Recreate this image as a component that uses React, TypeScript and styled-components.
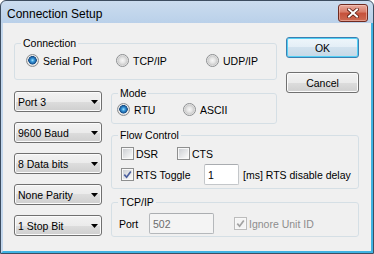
import React from "react";
import styled, { createGlobalStyle } from "styled-components";

const GlobalStyle = createGlobalStyle`
  html, body { margin: 0; padding: 0; background: #ffffff; }
  body {
    font-family: "Liberation Sans", Arial, sans-serif;
    font-size: 10.5px;
    color: #000;
  }
  * { box-sizing: border-box; }
`;

// window chrome
const Window = styled.div`
  width: 374px;
  height: 254px;
  display: flex;
  flex-direction: column;
  border: 1px solid #3d4d60;
  border-radius: 6px 6px 0 0;
  background: linear-gradient(#cbdcef, #b9d0e9 23px);
  overflow: hidden;
`;

const TitleBar = styled.div`
  height: 22px;
  flex: none;
  display: flex;
  align-items: center;
  justify-content: space-between;
  padding: 0 5px 0 6px;
`;

const Title = styled.span`
  font-size: 12px;
  margin-top: 3px;
`;

const CloseButton = styled.div`
  width: 30px;
  height: 18px;
  margin-top: 1px;
  display: flex;
  align-items: center;
  justify-content: center;
  border: 1px solid #6f2b21;
  border-radius: 3px;
  background: linear-gradient(#e8ab9e, #d77a67 45%, #c5503a 50%, #cd6a52);
  box-shadow: inset 0 0 0 1px rgba(255, 220, 210, 0.45);
`;

const Client = styled.div`
  flex: 1;
  background: #f0f0f0;
  border-left: 2px solid #c3d7ed;
  border-right: 2px solid #3fb3e3;
  border-bottom: 2px solid #3fb3e3;
  padding: 14px 0 0 11px;
`;

const Layout = styled.div`
  display: grid;
  grid-template-columns: 88px 166px 73px;
  column-gap: 9px;
  align-items: start;
`;

// group boxes
const Group = styled.fieldset<{ $col: string; $row: string; $top?: number }>`
  grid-column: ${(p) => p.$col};
  grid-row: ${(p) => p.$row};
  margin: ${(p) => p.$top ?? 0}px 0 0 0;
  min-width: 0;
  padding: 0;
  border: 1px solid #d5dfe5;
  border-radius: 3px;
`;

const Legend = styled.legend`
  margin-left: 6px;
  padding: 0 2px;
  line-height: 13px;
`;

const GroupBody = styled.div<{ $pad: string }>`
  padding: ${(p) => p.$pad};
`;

const OptionRow = styled.div<{ $cell: number }>`
  display: grid;
  grid-template-columns: repeat(3, ${(p) => p.$cell}px);
  height: 15px;
`;

const Option = styled.label<{ $disabled?: boolean }>`
  display: flex;
  align-items: center;
  gap: 4px;
  height: 15px;
  white-space: nowrap;
  color: ${(p) => (p.$disabled ? "#8d8d8d" : "#000")};
`;

const CheckOption = styled(Option)<{ $width?: number; $offset?: number }>`
  gap: 2px;
  width: ${(p) => (p.$width ? `${p.$width}px` : "auto")};
  margin-left: ${(p) => p.$offset ?? 0}px;
  flex: none;
`;

const Radio = styled.span<{ $checked?: boolean }>`
  width: 13px;
  height: 13px;
  flex: none;
  border-radius: 50%;
  border: 1px solid #8c8e90;
  background: ${(p) =>
    p.$checked
      ? "radial-gradient(circle at 50% 48%, #a9e6fc 0, #3f9fe0 1.5px, #1b5f9f 3.4px, #1a4c80 4px, #f2f2f2 4.5px, #d9d9d9 5.5px)"
      : "radial-gradient(circle, #f7f7f7 0, #e6e6e6 2.5px, #cdcdcd 4.6px, #f3f3f3 5.5px)"};
`;

const CheckBox = styled.span<{ $disabled?: boolean }>`
  width: 13px;
  height: 13px;
  flex: none;
  display: flex;
  align-items: center;
  justify-content: center;
  border: 1px solid ${(p) => (p.$disabled ? "#bcbcbc" : "#8e8f8f")};
  background: ${(p) =>
    p.$disabled ? "#f4f4f4" : "linear-gradient(135deg, #cdd0d4 10%, #f7f7f7 85%)"};
  box-shadow: inset 0 0 0 1px #f8f8f8;
`;

const FlowRow = styled.div<{ $height: number }>`
  display: flex;
  align-items: center;
  height: ${(p) => p.$height}px;
`;

const Stack = styled.div`
  display: flex;
  flex-direction: column;
  gap: 3px;
`;

const Edit = styled.div<{ $width: number; $disabled?: boolean }>`
  width: ${(p) => p.$width}px;
  height: 21px;
  flex: none;
  display: flex;
  align-items: center;
  padding-left: 3px;
  border: 1px solid ${(p) => (p.$disabled ? "#b5b8bb" : "#c4c7ca")};
  border-top-color: ${(p) => (p.$disabled ? "#abaeb1" : "#a9acb0")};
  border-radius: 2px;
  background: ${(p) => (p.$disabled ? "#f4f4f4" : "#ffffff")};
  color: ${(p) => (p.$disabled ? "#6d6d6d" : "#000")};
`;

const Note = styled.span`
  margin-left: 4px;
  white-space: nowrap;
`;

const FieldLabel = styled.span`
  width: 30px;
  flex: none;
`;

// left column combos
const ComboColumn = styled.div`
  grid-column: 1;
  grid-row: 2 / 5;
  padding-top: 11px;
  display: flex;
  flex-direction: column;
  gap: 10px;
`;

const Combo = styled.div`
  height: 21px;
  display: flex;
  align-items: center;
  justify-content: space-between;
  padding: 0 3px 0 3px;
  border: 1px solid #707070;
  border-radius: 3px;
  background: linear-gradient(#f2f2f2 0%, #ebebeb 50%, #dddddd 50%, #cfcfcf 100%);
  box-shadow: inset 0 0 0 1px #fbfbfb;
`;

// buttons
const ButtonColumn = styled.div`
  grid-column: 3;
  grid-row: 1 / 3;
  display: flex;
  flex-direction: column;
  gap: 14px;
`;

const PushButton = styled.div<{ $focused?: boolean }>`
  height: 21px;
  display: flex;
  align-items: center;
  justify-content: center;
  border: 1px solid ${(p) => (p.$focused ? "#3c7fb1" : "#707070")};
  border-radius: 3px;
  background: ${(p) =>
    p.$focused
      ? "linear-gradient(#eef6fb 0%, #e3eef6 50%, #d2e2ee 50%, #c6d8e6 100%)"
      : "linear-gradient(#f2f2f2 0%, #ebebeb 50%, #dddddd 50%, #cfcfcf 100%)"};
  box-shadow: inset 0 0 0 1px ${(p) => (p.$focused ? "#53d0f5" : "#fbfbfb")};
`;

const Check = ({ disabled }: { disabled?: boolean }) => (
  <svg width="9" height="9" viewBox="0 0 9 9">
    <path
      d="M1.3 4.6 L3.6 7.2 L7.8 1.4"
      fill="none"
      stroke={disabled ? "#a2a2a2" : "#4b5f9e"}
      strokeWidth="1.7"
    />
  </svg>
);

const Arrow = () => (
  <svg width="7" height="4" viewBox="0 0 7 4">
    <path d="M0 0 H7 L3.5 4 Z" fill="#000" />
  </svg>
);

const CloseGlyph = () => (
  <svg width="12" height="10" viewBox="0 0 12 10">
    <path d="M2 1.5 L10 8.5 M10 1.5 L2 8.5" stroke="#5b1c12" strokeWidth="3.6" strokeLinecap="square" />
    <path d="M2 1.5 L10 8.5 M10 1.5 L2 8.5" stroke="#ffffff" strokeWidth="2" strokeLinecap="square" />
  </svg>
);

const combos = ["Port 3", "9600 Baud", "8 Data bits", "None Parity", "1 Stop Bit"];

export default function App() {
  return (
    <>
      <GlobalStyle />
      <Window>
        <TitleBar>
          <Title>Connection Setup</Title>
          <CloseButton>
            <CloseGlyph />
          </CloseButton>
        </TitleBar>
        <Client>
          <Layout>
            <Group $col="1 / 3" $row="1">
              <Legend>Connection</Legend>
              <GroupBody $pad="3px 0 11px 11px">
                <OptionRow $cell={90}>
                  <Option>
                    <Radio $checked />
                    Serial Port
                  </Option>
                  <Option>
                    <Radio />
                    TCP/IP
                  </Option>
                  <Option>
                    <Radio />
                    UDP/IP
                  </Option>
                </OptionRow>
              </GroupBody>
            </Group>

            <ButtonColumn>
              <PushButton $focused>OK</PushButton>
              <PushButton>Cancel</PushButton>
            </ButtonColumn>

            <ComboColumn>
              {combos.map((c) => (
                <Combo key={c}>
                  {c}
                  <Arrow />
                </Combo>
              ))}
            </ComboColumn>

            <Group $col="2" $row="2" $top={7}>
              <Legend>Mode</Legend>
              <GroupBody $pad="2px 0 6px 5px">
                <OptionRow $cell={66}>
                  <Option>
                    <Radio $checked />
                    RTU
                  </Option>
                  <Option>
                    <Radio />
                    ASCII
                  </Option>
                </OptionRow>
              </GroupBody>
            </Group>

            <Group $col="2 / 4" $row="3" $top={5}>
              <Legend>Flow Control</Legend>
              <GroupBody $pad="4px 0 3px 9px">
                <Stack>
                  <FlowRow $height={15}>
                    <CheckOption $width={56}>
                      <CheckBox />
                      DSR
                    </CheckOption>
                    <CheckOption>
                      <CheckBox />
                      CTS
                    </CheckOption>
                  </FlowRow>
                  <FlowRow $height={21}>
                    <CheckOption $width={83}>
                      <CheckBox>
                        <Check />
                      </CheckBox>
                      RTS Toggle
                    </CheckOption>
                    <Edit $width={35}>1</Edit>
                    <Note>[ms] RTS disable delay</Note>
                  </FlowRow>
                </Stack>
              </GroupBody>
            </Group>

            <Group $col="2 / 4" $row="4" $top={7}>
              <Legend>TCP/IP</Legend>
              <GroupBody $pad="4px 0 2px 7px">
                <FlowRow $height={21}>
                  <FieldLabel>Port</FieldLabel>
                  <Edit $width={65} $disabled>
                    502
                  </Edit>
                  <CheckOption $disabled $offset={20}>
                    <CheckBox $disabled>
                      <Check disabled />
                    </CheckBox>
                    Ignore Unit ID
                  </CheckOption>
                </FlowRow>
              </GroupBody>
            </Group>
          </Layout>
        </Client>
      </Window>
    </>
  );
}
